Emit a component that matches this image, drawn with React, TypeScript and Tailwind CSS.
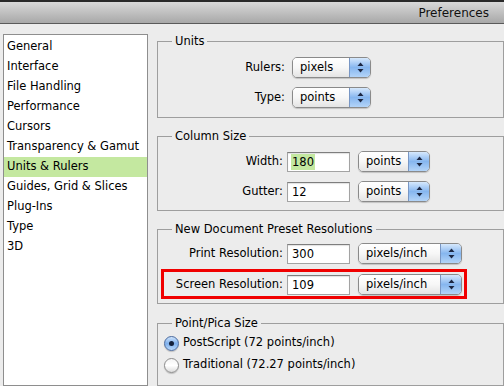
import React from "react";

function Arrows() {
  return (
    <svg width="7" height="11" viewBox="0 0 7 11">
      <path d="M3.5 0.5 L6.5 4 L0.5 4 Z" fill="#1c2742" />
      <path d="M3.5 10.5 L6.5 7 L0.5 7 Z" fill="#1c2742" />
    </svg>
  );
}

function Popup({ label, w }: { label: string; w: string }) {
  return (
    <div
      className={`flex h-[21px] ${w} overflow-hidden rounded-[5px] border border-[#8a8a8a] shadow-[0_1px_1px_rgba(0,0,0,0.18)]`}
    >
      <div className="flex flex-1 items-center bg-gradient-to-b from-white via-[#f7f7f7] to-[#e4e4e4] pl-[7px]">
        {label}
      </div>
      <div className="flex w-[21px] items-center justify-center border-l border-[#7896c4] bg-gradient-to-b from-[#d6e8fc] via-[#86b6ef] to-[#b3d4f8]">
        <Arrows />
      </div>
    </div>
  );
}

function Field({ value, selected }: { value: string; selected?: boolean }) {
  return (
    <div className="flex h-[20px] w-[63px] items-center border border-[#a3a3a3] border-t-[#7e7e7e] bg-white pl-[3px] shadow-[inset_0_1px_1px_rgba(0,0,0,0.12)]">
      <span className={selected ? "bg-[#c4e8a0] px-[1px] leading-[16px]" : "px-[1px] leading-[16px]"}>{value}</span>
    </div>
  );
}

function Group({
  title,
  children,
  className,
}: {
  title: string;
  children: React.ReactNode;
  className?: string;
}) {
  return (
    <fieldset className={`border border-[#9e9e9e] ${className ?? ""}`}>
      <legend className="ml-[14px] px-[3px] leading-[14px]">{title}</legend>
      {children}
    </fieldset>
  );
}

function Radio({ checked }: { checked?: boolean }) {
  if (checked) {
    return (
      <div className="flex h-[15px] w-[15px] items-center justify-center rounded-full border border-[#4a6a9e] bg-gradient-to-b from-[#cfe4fb] via-[#7fb0ec] to-[#b9d8fa] shadow-[0_1px_1px_rgba(0,0,0,0.2)]">
        <div className="h-[5px] w-[5px] rounded-full bg-[#14203a]" />
      </div>
    );
  }
  return (
    <div className="h-[15px] w-[15px] rounded-full border border-[#8c8c8c] bg-gradient-to-b from-[#f4f4f4] via-white to-[#dcdcdc] shadow-[0_1px_1px_rgba(0,0,0,0.2)]" />
  );
}

const items = [
  "General",
  "Interface",
  "File Handling",
  "Performance",
  "Cursors",
  "Transparency & Gamut",
  "Units & Rulers",
  "Guides, Grid & Slices",
  "Plug-Ins",
  "Type",
  "3D",
];

export default function App() {
  return (
    <div className="h-[386px] w-[504px] overflow-hidden bg-[#ececec] font-['DejaVu_Sans',sans-serif] text-[11.5px] text-black">
      <div className="flex h-[24px] items-center justify-end border-b border-t-2 border-b-[#5a5a5a] border-t-[#2a2a2a] bg-gradient-to-b from-[#d9d9d9] to-[#a8a8a8] pr-[15px] text-[12px] text-[#111]">
        Preferences
      </div>
      <div className="flex pl-[3px] pt-[10px]">
        <div className="h-[352px] w-[145px] border border-[#8e8e8e] bg-white pt-[2px]">
          {items.map((it) => (
            <div
              key={it}
              className={`flex h-[20px] items-center pl-[3px] ${it === "Units & Rulers" ? "bg-[#c4e8a0]" : ""}`}
            >
              {it}
            </div>
          ))}
        </div>
        <div className="ml-[9px] flex w-[347px] flex-col">
          <Group title="Units" className="pb-[9px] pt-[9px]">
            <div className="flex flex-col gap-[9px]">
              <div className="flex h-[21px] items-center gap-[7px]">
                <div className="w-[127px] text-right">Rulers:</div>
                <Popup label="pixels" w="w-[79px]" />
              </div>
              <div className="flex h-[21px] items-center gap-[7px]">
                <div className="w-[127px] text-right">Type:</div>
                <Popup label="points" w="w-[79px]" />
              </div>
            </div>
          </Group>
          <Group title="Column Size" className="mt-[11px] pb-[8px] pt-[8px]">
            <div className="flex flex-col gap-[9px]">
              <div className="flex h-[21px] items-center">
                <div className="w-[125px] text-right">Width:</div>
                <div className="ml-[4px]">
                  <Field value="180" selected />
                </div>
                <div className="ml-[8px]">
                  <Popup label="points" w="w-[72px]" />
                </div>
              </div>
              <div className="flex h-[21px] items-center">
                <div className="w-[125px] text-right">Gutter:</div>
                <div className="ml-[4px]">
                  <Field value="12" />
                </div>
                <div className="ml-[8px]">
                  <Popup label="points" w="w-[72px]" />
                </div>
              </div>
            </div>
          </Group>
          <Group title="New Document Preset Resolutions" className="mt-[11px] pb-[8px] pt-[7px]">
            <div className="flex flex-col gap-[10px]">
              <div className="flex h-[21px] items-center">
                <div className="w-[125px] text-right">Print Resolution:</div>
                <div className="ml-[4px]">
                  <Field value="300" />
                </div>
                <div className="ml-[8px]">
                  <Popup label="pixels/inch" w="w-[104px]" />
                </div>
              </div>
              <div className="relative flex h-[21px] items-center">
                <div className="w-[125px] text-right">Screen Resolution:</div>
                <div className="ml-[4px]">
                  <Field value="109" />
                </div>
                <div className="ml-[8px]">
                  <Popup label="pixels/inch" w="w-[104px]" />
                </div>
                <div className="pointer-events-none absolute left-[3px] top-[-5px] h-[30px] w-[306px] border-[3px] border-[#f00000]" />
              </div>
            </div>
          </Group>
          <Group title="Point/Pica Size" className="mt-[12px] pb-[11px] pt-[4px]">
            <div className="flex flex-col gap-[4px] pl-[6px]">
              <div className="flex h-[18px] items-center gap-[4px]">
                <Radio checked />
                <span>PostScript (72 points/inch)</span>
              </div>
              <div className="flex h-[18px] items-center gap-[4px]">
                <Radio />
                <span>Traditional (72.27 points/inch)</span>
              </div>
            </div>
          </Group>
        </div>
      </div>
    </div>
  );
}
